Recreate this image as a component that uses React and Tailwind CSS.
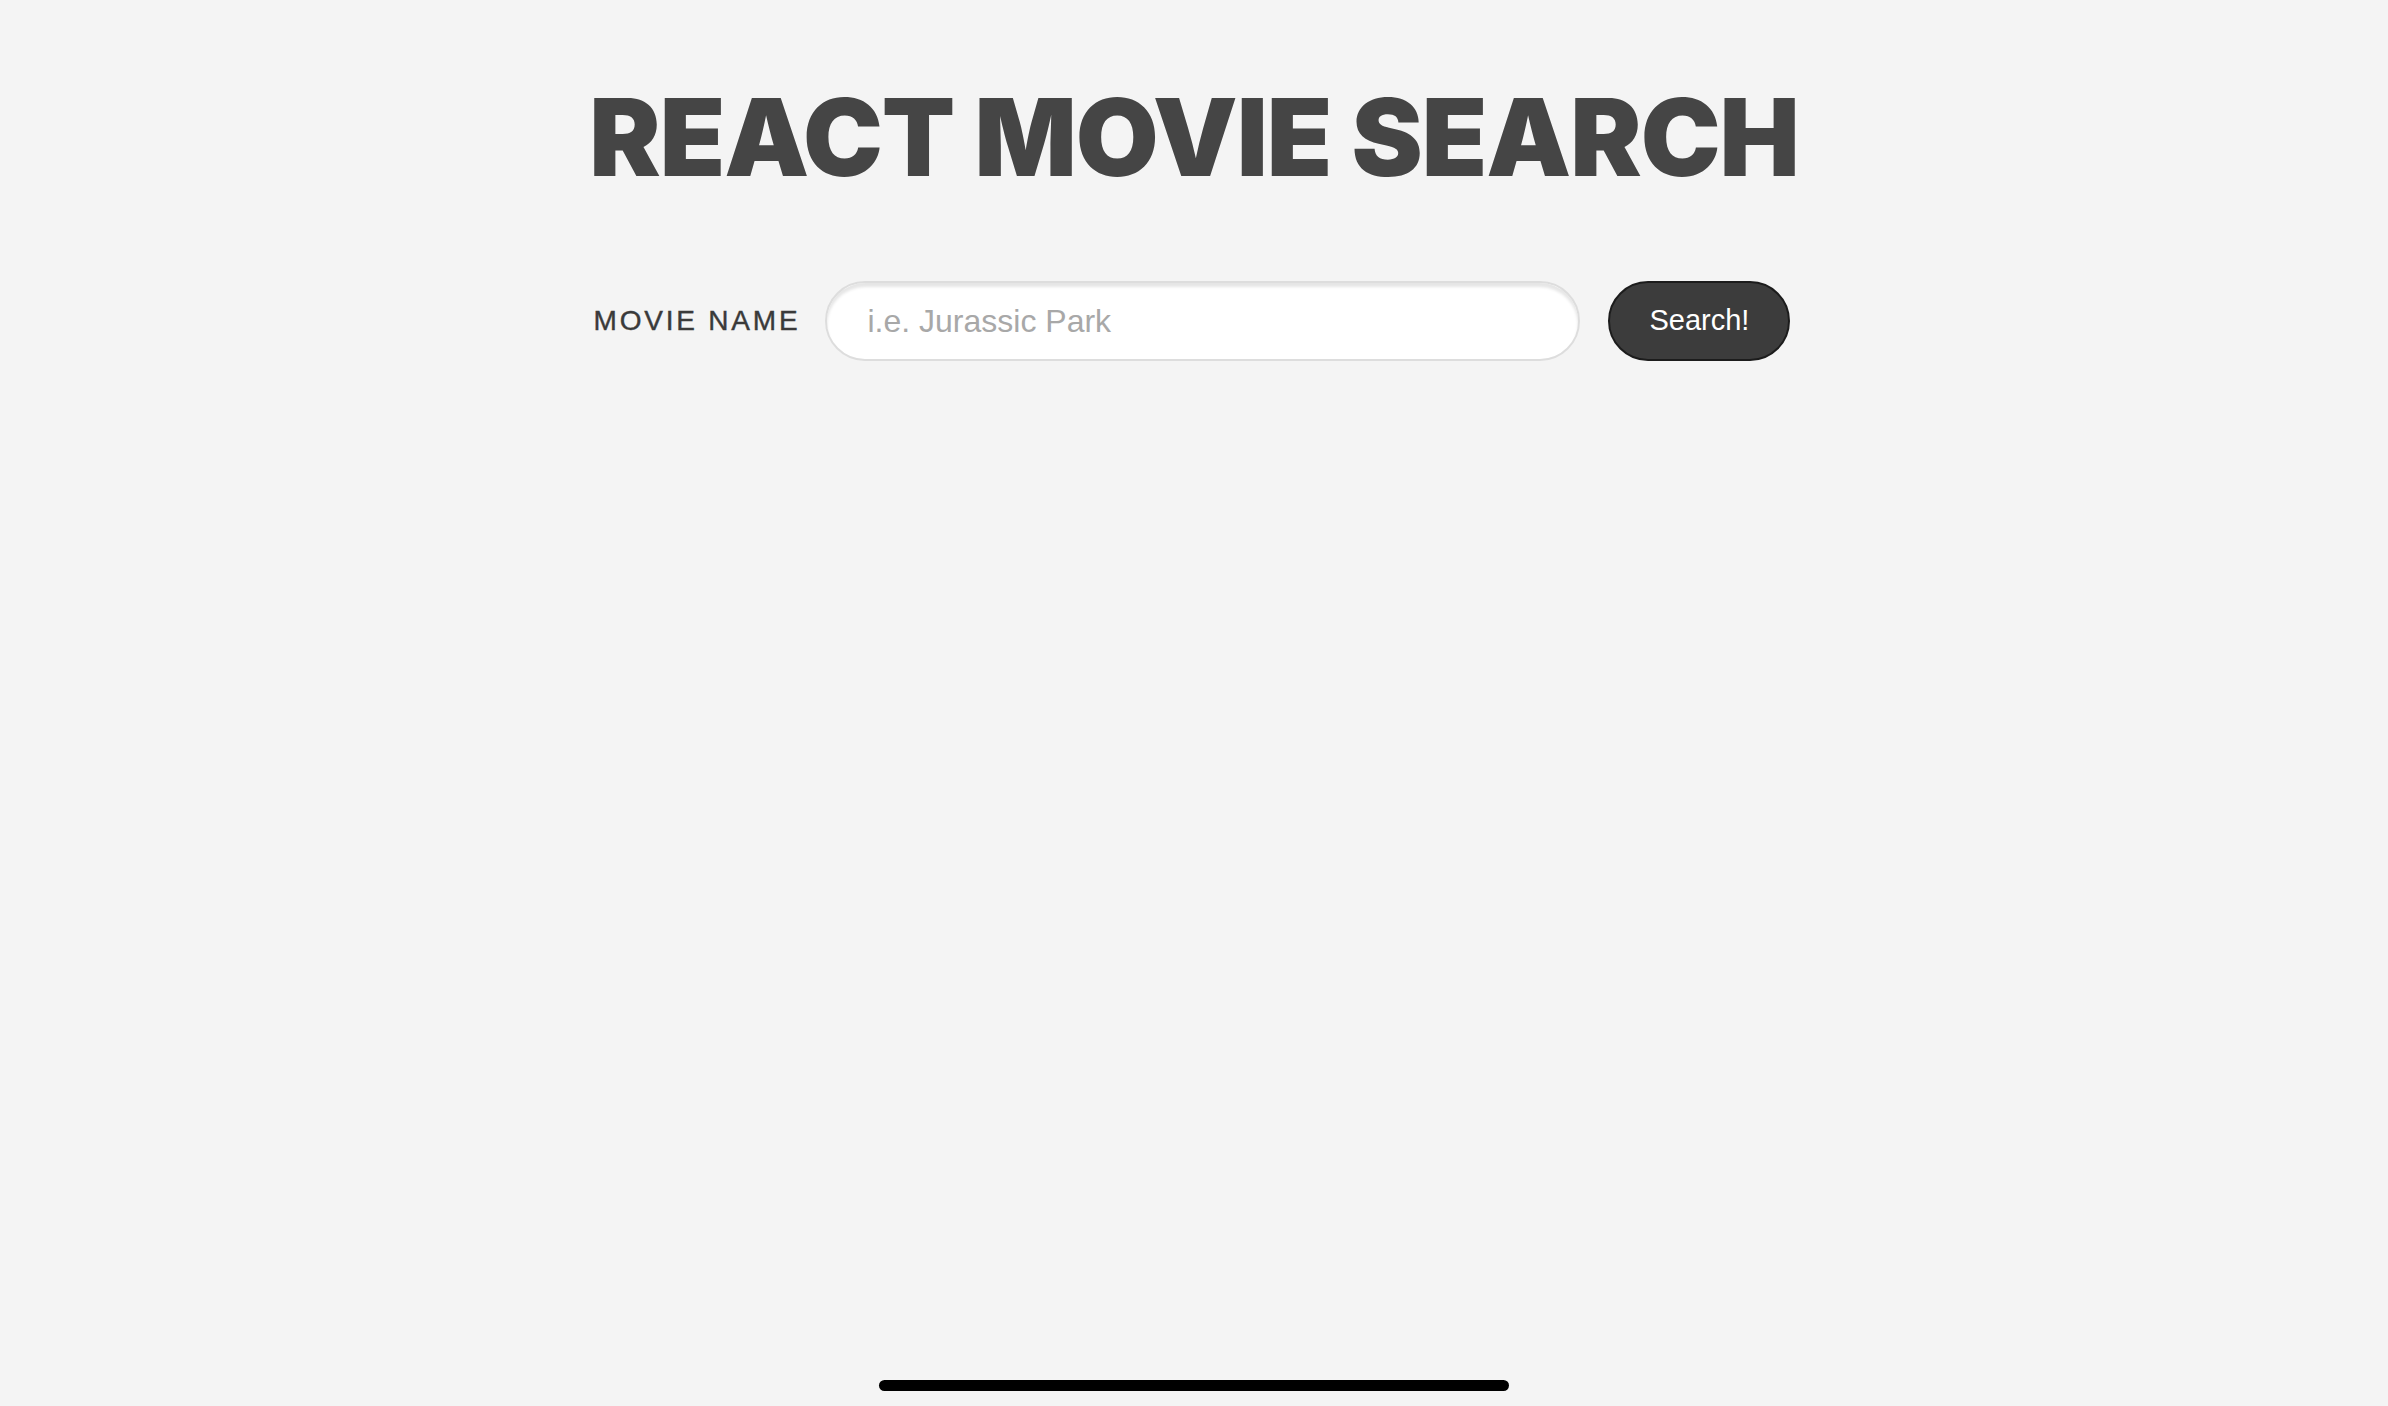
import React, { useState } from "react";

const App = () => {
  const [query, setQuery] = useState("");

  return (
    <div className="min-h-screen w-full bg-[#f4f4f4] flex flex-col items-center">
      <h1 className="mt-[84px] font-['Inter',sans-serif] font-black text-[107px] leading-none tracking-[-0.01em] text-[#454545] uppercase">
        React Movie Search
      </h1>

      <form
        className="mt-[90px] mr-[4px] flex items-center"
        onSubmit={(e) => e.preventDefault()}
      >
        <label
          htmlFor="query"
          className="font-['Liberation_Sans',sans-serif] text-[28px] tracking-[0.1em] text-[#3a3a3a] uppercase [-webkit-text-stroke:0.4px_#3a3a3a]"
        >
          Movie Name
        </label>
        <input
          id="query"
          type="text"
          value={query}
          onChange={(e) => setQuery(e.target.value)}
          placeholder="i.e. Jurassic Park"
          className="ml-[25px] w-[755px] h-[80px] rounded-full bg-white border-2 border-[#dddddd] pl-[40px] pr-6 font-['Liberation_Sans',sans-serif] text-[32px] text-[#333] placeholder:text-[#a8a8a8] shadow-[inset_0_4px_3px_rgba(0,0,0,0.1)] outline-none"
        />
        <button
          type="submit"
          className="ml-[28px] w-[182px] h-[80px] rounded-full bg-[#3c3c3c] border-2 border-[#1c1c1c] text-white font-['Liberation_Sans',sans-serif] text-[29px]"
        >
          Search!
        </button>
      </form>

      {/* home indicator */}
      <div className="mt-auto mb-[15px] w-[630px] h-[11px] rounded-full bg-black"></div>
    </div>
  );
};

export default App;
